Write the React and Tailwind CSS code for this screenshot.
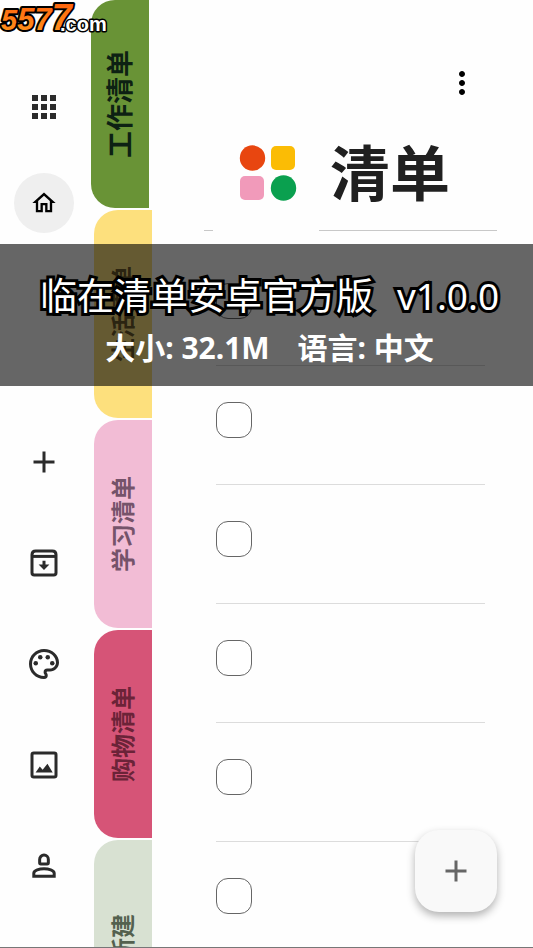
import {
  MdApps,
  MdAdd,
  MdMoreVert,
  MdOutlineHome,
  MdOutlinePalette,
} from "react-icons/md";

const tabs = [
  { name: "生活清单", style: "h-[208px] bg-[#fde07d] text-[#6b5a2c]" },
  { name: "学习清单", style: "h-[208px] bg-[#f2bcd5] text-[#75536a]" },
  { name: "购物清单", style: "h-[208px] bg-[#d65477] text-[#6b2338]" },
  { name: "新建", style: "h-[196px] bg-[#d8e1d2] text-[#54614f]" },
];

const items = [1, 2, 3, 4, 5, 6];

const ArchiveIcon = () => (
  <svg width="36" height="36" viewBox="0 0 24 24" fill="none" stroke="currentColor" strokeWidth="2">
    <path
      d="M4 6.500Q4 4 6.500 4h11Q20 4 20 6.500v12a1.500 1.500 0 0 1-1.500 1.500h-13A1.500 1.500 0 0 1 4 18.500z"
      strokeLinejoin="round"
    />
    <path d="M4 7.600h16" />
    <path d="M11 10.500h2V13h2.600L12 16.600 8.400 13H11z" fill="currentColor" stroke="none" />
  </svg>
);

const PictureIcon = () => (
  <svg width="36" height="36" viewBox="0 0 24 24" fill="none" stroke="currentColor" strokeWidth="2">
    <rect x="4" y="4" width="16" height="16" rx="1.200" />
    <path d="M6.400 17 9.200 13l1.900 2.200 3.200-4L17.800 17z" fill="currentColor" stroke="none" />
  </svg>
);

const PersonIcon = () => (
  <svg width="36" height="36" viewBox="0 0 24 24" fill="none" stroke="currentColor" strokeWidth="2">
    <path d="M9.100 9.900V7.600a2.900 2.900 0 0 1 5.800 0v2.300q0 .8-.8.8H9.900q-.8 0-.8-.8z" />
    <path d="M5.200 18.800v-2c0-2 3.800-2.900 6.800-2.900s6.800.9 6.800 2.900v2z" />
  </svg>
);

const SideButton = ({ label, children }) => (
  <button aria-label={label} className="flex h-9 w-9 items-center justify-center">
    {children}
  </button>
);

// Site mark in the corner
const SiteLogo = () => (
  <svg
    width="110"
    height="40"
    viewBox="0 0 110 40"
    className="absolute left-0 top-0 z-20"
    stroke="#000"
    strokeLinejoin="round"
    paintOrder="stroke"
    fontWeight="700"
    fontFamily="'Liberation Sans', sans-serif"
  >
    <defs>
      <linearGradient id="flame" x1="0" y1="0" x2="0" y2="1">
        <stop offset="0" stopColor="#ff5a0a" />
        <stop offset="1" stopColor="#ff9a1e" />
      </linearGradient>
    </defs>
    <text x="1" y="30" fill="url(#flame)" fontStyle="italic" strokeWidth="4">
      <tspan fontSize="29">5</tspan>
      <tspan fontSize="31">5</tspan>
      <tspan fontSize="31">7</tspan>
      <tspan fontSize="36">7</tspan>
    </text>
    <text x="60" y="31" fontSize="20" fill="#fff" strokeWidth="3">
      .com
    </text>
  </svg>
);

const App = () => {
  return (
    <div className="relative flex h-screen overflow-hidden border-b border-[#777] bg-[#fefefe] font-['Noto_Sans','Noto_Sans_CJK_SC',sans-serif]">
      <SiteLogo />

      {/* Side bar */}
      <nav className="flex w-[88px] shrink-0 flex-col items-center pt-[89px] text-[#2b2b2b]">
        <SideButton label="全部">
          <MdApps size={36} />
        </SideButton>
        <button
          aria-label="主页"
          className="mt-12 flex h-[60px] w-[60px] shrink-0 items-center justify-center rounded-full bg-[#efefef] text-black"
        >
          <MdOutlineHome size={28} />
        </button>
        <div className="mt-[211px] flex flex-col gap-[65px]">
          <SideButton label="添加">
            <MdAdd size={36} />
          </SideButton>
          <SideButton label="归档">
            <ArchiveIcon />
          </SideButton>
          <SideButton label="主题">
            <MdOutlinePalette size={36} />
          </SideButton>
          <SideButton label="图片">
            <PictureIcon />
          </SideButton>
          <SideButton label="我的">
            <PersonIcon />
          </SideButton>
        </div>
      </nav>

      {/* List tabs */}
      <div className="ml-[3px] flex w-[61px] shrink-0 flex-col items-end gap-[2px]">
        <button className="mr-[3px] flex h-[208px] w-[58px] shrink-0 items-center justify-center rounded-l-3xl bg-[#699336] text-[27px] leading-8 font-bold text-[#0d2113]">
          <span className="rotate-180 [text-orientation:sideways] [writing-mode:vertical-rl]">
            工作清单
          </span>
        </button>
        {tabs.map((tab) => (
          <button
            key={tab.name}
            className={`flex w-[58px] shrink-0 items-center justify-center rounded-l-3xl text-2xl font-bold ${tab.style}`}
          >
            <span className="rotate-180 [text-orientation:sideways] [writing-mode:vertical-rl]">
              {tab.name}
            </span>
          </button>
        ))}
      </div>

      {/* Content */}
      <main className="flex min-w-0 flex-1 flex-col pr-9 pl-[52px]">
        <div className="flex justify-end pt-[65px] pr-[17px]">
          <button aria-label="更多" className="text-black">
            <MdMoreVert size={36} />
          </button>
        </div>
        <div className="mt-[42px] flex items-center pl-[35px]">
          <svg width="58" height="58" viewBox="0 0 58 58" className="shrink-0">
            <circle cx="13.500" cy="14" r="12.700" fill="#e84610" />
            <rect x="32" y="2" width="24" height="24" rx="5" fill="#fbbc05" />
            <rect x="1" y="32" width="24" height="24" rx="5" fill="#f19aba" />
            <circle cx="44.500" cy="44" r="12.700" fill="#0aa04f" />
          </svg>
          <h1 className="ml-[33px] text-[60px] leading-[60px] font-bold text-[#202020]">清单</h1>
        </div>
        <div className="mt-[27px] flex h-px shrink-0 justify-between">
          <span className="w-[9px] bg-[#c8c8c8]" />
          <span className="w-[178px] bg-[#c8c8c8]" />
        </div>
        <ul className="mt-4 mr-3 ml-3">
          {items.map((item) => (
            <li key={item} className="border-b border-[#dcdcdc] pt-9 pb-[46px]">
              <input
                type="checkbox"
                aria-label={`事项 ${item}`}
                className="block h-9 w-9 appearance-none rounded-xl border border-[#666] bg-white"
              />
            </li>
          ))}
        </ul>
      </main>

      <button
        aria-label="新建事项"
        className="absolute right-9 bottom-[35px] flex h-[82px] w-[82px] items-center justify-center rounded-3xl bg-[#f9f9f9] text-[#666] shadow-[0_4px_8px_rgba(0,0,0,0.3)]"
      >
        <MdAdd size={36} />
      </button>

      {/* Caption band */}
      <div className="absolute inset-x-0 top-[244px] z-10 flex h-[142px] flex-col items-center bg-black/60 pt-[30px] pl-1.5 text-white">
        <p className="flex gap-6 text-[37px] leading-[44px] [-webkit-text-stroke:6px_black] [paint-order:stroke_fill]">
          <span>临在清单安卓官方版</span>
          <span>v1.0.0</span>
        </p>
        <p className="mt-2 flex gap-7 text-[30px] leading-[44px] font-bold">
          <span>大小: 32.1M</span>
          <span>语言: 中文</span>
        </p>
      </div>
    </div>
  );
};

export default App;
